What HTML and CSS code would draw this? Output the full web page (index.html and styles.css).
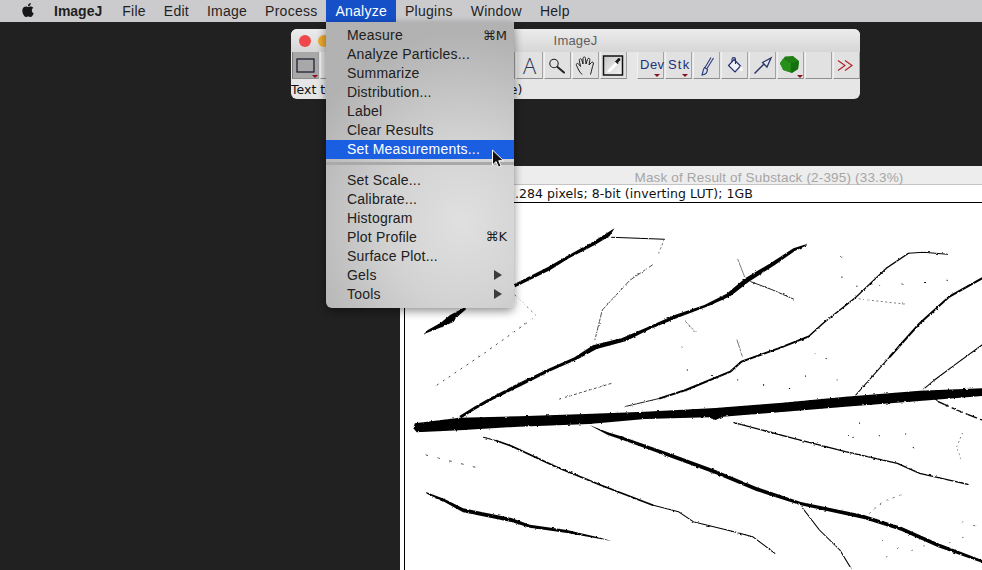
FILE: index.html
```html
<!DOCTYPE html>
<html lang="en">
<head>
<meta charset="utf-8">
<title>ImageJ</title>
<link rel="stylesheet" href="styles.css">
</head>
<body>
<div class="desktop">
  <header class="menubar">
    <svg class="apple" viewBox="0 0 24 24"><path d="M12.152 6.896c-.948 0-2.415-1.078-3.96-1.04-2.04.027-3.91 1.183-4.961 3.014-2.117 3.675-.546 9.103 1.519 12.09 1.013 1.454 2.208 3.09 3.792 3.039 1.52-.065 2.09-.987 3.935-.987 1.831 0 2.35.987 3.96.948 1.637-.026 2.676-1.48 3.676-2.948 1.156-1.688 1.636-3.325 1.662-3.415-.039-.013-3.182-1.221-3.22-4.857-.026-3.04 2.48-4.494 2.597-4.559-1.429-2.09-3.623-2.324-4.39-2.376-2-.156-3.675 1.09-4.61 1.09zM15.53 3.83c.843-1.012 1.4-2.427 1.245-3.83-1.207.052-2.662.805-3.532 1.818-.78.896-1.454 2.338-1.273 3.714 1.338.104 2.715-.688 3.559-1.701"/></svg>
    <span class="mb-item mb-app">ImageJ</span>
    <span class="mb-item">File</span>
    <span class="mb-item">Edit</span>
    <span class="mb-item">Image</span>
    <span class="mb-item">Process</span>
    <span class="mb-item mb-active">Analyze</span>
    <span class="mb-item">Plugins</span>
    <span class="mb-item">Window</span>
    <span class="mb-item">Help</span>
  </header>

  <section class="ij-window">
    <div class="ij-title">
      <span class="light red"></span><span class="light amber"></span>
      <span class="ij-title-text">ImageJ</span>
    </div>
    <div class="toolbar">
      <div class="tool selected"><svg viewBox="0 0 27 27"><rect x="5" y="7" width="17" height="13" fill="none" stroke="#14162e" stroke-width="1.2"/><path d="M20 23h6l-3 3z" fill="#8a1020"/></svg></div>
      <div class="tool"></div><div class="tool"></div><div class="tool"></div><div class="tool"></div><div class="tool"></div><div class="tool"></div><div class="tool"></div>
      <div class="tool tool-a">A</div>
      <div class="tool"><svg viewBox="0 0 27 27"><circle cx="10" cy="11.500" r="4.200" fill="none" stroke="#222" stroke-width="1.100"/><path d="M13.500 15l6.500 5.500" stroke="#222" stroke-width="2" stroke-linecap="round"/></svg></div>
      <div class="tool"><svg viewBox="0 0 27 27"><path d="M10 22.500C7 19.500 6 16.500 4.500 13.500C3.800 11.500 5.800 10.500 7 12.500L8.500 14.500L7.300 8.500C7 6.500 9.300 6 9.800 8L11 12L11 6.500C11 4.500 13.500 4.500 13.500 6.500L14 12L15.500 7.500C16 5.500 18.300 6 17.800 8.500L17 13L19.500 10.500C20.500 9.500 22 10.500 21.300 12C20.300 15 19.500 19 18.500 22.500" fill="none" stroke="#1c1c1c" stroke-width="1"/></svg></div>
      <div class="tool"><svg viewBox="0 0 27 27"><defs><linearGradient id="drop" x1="0" y1="0" x2="1" y2="1"><stop offset="0" stop-color="#c8c8c8"/><stop offset="1" stop-color="#f2f2f2"/></linearGradient></defs><rect x="3.500" y="4" width="19" height="19" fill="url(#drop)" stroke="#111" stroke-width="1.500"/><path d="M7 20.500l1-2.500 7.500-7.500 2 2-7.500 7.500z" fill="#fff"/><path d="M15.500 9l2.500-2.500c1-1 2.800 0 2.300 1.800l-2.300 2.200 .6 .7-1 .8-3-3z" fill="#1a1a1a"/></svg></div>
      <div class="tool tool-gap tool-text">Dev<i class="caret"></i></div>
      <div class="tool tool-text tool-stk">Stk<i class="caret"></i></div>
      <div class="tool"><svg viewBox="0 0 27 27"><path d="M18 5.500L12 15.500M20.500 6L14 16.500" fill="none" stroke="#2a3a78" stroke-width="1.100"/><path d="M11.500 15.500l3 1.800c-.3 3.500-2.200 5.700-5.500 5.700 1-1.500.5-5 2.500-7.500z" fill="#d9dfee" stroke="#2a3a78" stroke-width="1.200"/></svg></div>
      <div class="tool"><svg viewBox="0 0 27 27"><path d="M13 7.500l6.500 6.500-5.500 6-6.500-6.500z" fill="#eef0f6" stroke="#233070" stroke-width="1.200"/><path d="M11 10V7.500c0-2.500 3.500-2.500 3.500 0v4.500" fill="none" stroke="#233070" stroke-width="1.100"/><path d="M19.500 14l2 2v3h-3z" fill="#fff"/></svg></div>
      <div class="tool"><svg viewBox="0 0 27 27"><path d="M5.500 21.500L15 12" stroke="#2a3566" stroke-width="1.400"/><path d="M13.500 10.500L22 6l-4 9z" fill="#e4e8f2" stroke="#2a3566" stroke-width="1.300"/></svg></div>
      <div class="tool"><svg viewBox="0 0 27 27"><path d="M8 4.500l8-.5 6 5-1 8-6 4-9-3-3-7z" fill="#1f7d14"/><path d="M6 6.500l8 5-1 8.800-6-2-4-6.500z" fill="#25901a"/><path d="M14 11.500l8-2.500-1 8-6.500 4z" fill="#157010"/><path d="M20 23h6l-3 3z" fill="#8a1020"/></svg></div>
      <div class="tool"></div>
      <div class="tool"><svg viewBox="0 0 27 27"><path d="M5 8.500l7 5-7 5M12 8.500l7 5-7 5" fill="none" stroke="#b3242c" stroke-width="1.200"/></svg></div>
    </div>
    <div class="ij-status"><span>Text tool</span><span class="status-rest">(double click to configure)</span></div>
  </section>

  <section class="img-window">
    <div class="img-title">Mask of Result of Substack (2-395) (33.3%)</div>
    <div class="img-info">1.712x1.284 pixels; 8-bit (inverting LUT); 1GB</div>
    <div class="canvas">
      <svg class="leaf" viewBox="13.500 9 1554.500 1101" preserveAspectRatio="none">
        <defs>
          <filter id="rough" x="0" y="0" width="1600" height="1130" filterUnits="userSpaceOnUse">
            <feTurbulence type="fractalNoise" baseFrequency="0.12" numOctaves="2" seed="4"/>
            <feDisplacementMap in="SourceGraphic" scale="7" xChannelSelector="R" yChannelSelector="G"/>
          </filter>
        </defs>
        <g class="veins" filter="url(#rough)" fill="none" stroke="#000" stroke-linecap="round" stroke-linejoin="round">
          <path class="solid" d="M40 670L160 653 320 649 500 642 660 635 850 624 1030 608 1200 590 1400 572 1568 565V588L1400 603 1200 620 1030 636 870 650 850 660 830 652 660 657 510 672 320 680 160 691 45 697 36 685z"/>
          <path class="solid" d="M160 648L200 620 240 595 320 549 400 506 470 472 520 436 600 413 660 385 740 345 820 315 880 281 930 235 1000 188 1060 145 1098 131 1098 135 1065 152 1010 195 940 245 890 289 830 319 745 355 670 389 610 423 530 447 480 477 405 514 330 556 250 599 205 627 165 655z"/>
          <path class="solid" d="M62 405L75 390 110 368 135 345 175 322 178 328 150 355 145 365 115 380 70 400z"/>
          <path class="solid" d="M308 252L400 200 450 168 520 125 578 85 565 108 525 135 455 175 405 210 310 262z"/>
          <path class="solid" d="M510 675L560 697 600 710 740 765 850 810 960 861 1080 906 1250 945 1350 980 1450 1030 1568 1080V1088L1450 1042 1350 992 1250 957 1080 916 960 873 850 822 740 777 600 720 560 705z"/>
          <path class="solid" d="M70 876L120 897 170 925 300 954 350 974 450 990 540 1013 570 1023 540 1017 450 999 350 983 300 966 170 937 120 906 72 881z"/>
          <polyline stroke-width="2.500" points="605,620 700,595"/>
          <polyline stroke-width="6" points="700,595 770,570 890,515 920,485 1020,445 1100,410"/>
          <polyline stroke-width="4" points="1100,410 1140,370 1225,295 1310,205 1370,160"/>
          <polyline stroke-width="3" points="1370,160 1410,157 1475,163"/>
          <polyline stroke-width="3" points="1228,585 1320,470"/>
          <polyline stroke-width="6" points="1320,470 1400,370 1480,290 1568,235"/>
          <polyline stroke-width="3" points="1410,568 1440,540 1500,490 1568,435"/>
          <polyline stroke-width="3" points="225,712 260,722"/>
          <polyline stroke-width="5" points="260,722 300,738 420,800 540,855 610,885 680,915"/>
          <polyline stroke-width="3" points="680,915 750,935 790,965 900,995 950,1010 1010,1060"/>
          <polyline stroke-width="4" points="900,668 1060,715 1200,755 1340,790 1400,820 1530,853"/>
          <polyline stroke-width="3" points="1085,925 1130,990 1185,1050 1215,1105"/>
          <polyline stroke-width="3" points="570,112 640,115 712,118"/>
          <polyline stroke-width="1.500" stroke-dasharray="5 8" points="712,118 695,165"/>
          <polyline stroke-width="2" stroke-dasharray="14 6" points="680,195 620,240 545,330 525,420"/>
          <polyline stroke-width="1.500" points="910,178 930,235"/>
          <polyline stroke-width="2.500" points="945,245 1000,268 1060,297"/>
          <polyline stroke-width="1.500" points="908,420 922,468"/>
          <polyline stroke-width="1.500" stroke-dasharray="6 6" points="770,365 795,395"/>
          <polyline stroke-width="4" stroke-dasharray="30 12" points="1450,605 1500,630 1568,660"/>
          <polyline stroke-width="1.500" stroke-dasharray="3 9" points="1225,295 1300,305 1360,312"/>
          <polyline stroke-width="2" stroke-dasharray="6 8" points="430,597 570,550"/>
          <polyline stroke-width="2" stroke-dasharray="4 16" points="100,555 220,465 365,350"/>
          <polyline stroke-width="1.500" stroke-dasharray="4 12" points="310,285 365,345"/>
          <polyline stroke-width="2" stroke-dasharray="5 28" points="70,765 215,805"/>
          <polyline stroke-width="1.500" stroke-dasharray="4 16" points="1265,940 1300,905 1350,885"/>
          <polyline stroke-width="1.500" stroke-dasharray="3 10" points="1515,700 1500,740 1510,775"/>
          <polyline stroke-width="3" stroke-dasharray="1 60" points="1190,170 1190,230 1200,260 1390,250 1480,240"/>
          <polyline stroke-width="3" stroke-dasharray="1 70" points="760,440 775,515 1075,570 1130,437 1250,695 1180,715 1390,700 1380,760"/>
          <polyline stroke-width="2" stroke-dasharray="1 70" points="1300,1020 1300,1050 1480,1030 1530,940 1560,1000 1260,1085"/>
        </g>
      </svg>
    </div>
  </section>

  <nav class="menu">
    <div class="menu-item"><span>Measure</span><span class="short">⌘M</span></div>
    <div class="menu-item">Analyze Particles...</div>
    <div class="menu-item">Summarize</div>
    <div class="menu-item">Distribution...</div>
    <div class="menu-item">Label</div>
    <div class="menu-item">Clear Results</div>
    <div class="menu-item hot">Set Measurements...</div>
    <div class="menu-sep"></div>
    <div class="menu-item">Set Scale...</div>
    <div class="menu-item">Calibrate...</div>
    <div class="menu-item">Histogram</div>
    <div class="menu-item"><span>Plot Profile</span><span class="short">⌘K</span></div>
    <div class="menu-item">Surface Plot...</div>
    <div class="menu-item"><span>Gels</span><i class="sub"></i></div>
    <div class="menu-item"><span>Tools</span><i class="sub"></i></div>
  </nav>

  <svg class="cursor" viewBox="0 0 14 20"><path d="M1.500 1v15l3.600-3.400 2.400 5.600 2.600-1.100-2.400-5.400h4.800z" fill="#111" stroke="#fff" stroke-width="1"/></svg>
</div>
</body>
</html>
```

FILE: styles.css
```css
html, body { margin: 0; padding: 0; overflow: hidden; }
.desktop {
  position: relative;
  width: 982px;
  height: 570px;
  overflow: hidden;
  background: #212121;
  font-family: "Liberation Sans", Arial, sans-serif;
  font-size: 14px;
  color: #1f1f1f;
}

/* menu bar */
.menubar {
  display: flex;
  align-items: center;
  height: 22px;
  background: #cbcbce;
  padding-left: 21px;
}
.apple { width: 14px; height: 16px; margin-right: 10px; fill: #161616; margin-top: -3px; }
.mb-item { padding: 0 9px; line-height: 22px; letter-spacing: .25px; }
.mb-app { font-weight: bold; padding-right: 11px; letter-spacing: 0; }
.mb-active { background: #1550c9; color: #fff; }

/* ImageJ toolbar window */
.ij-window {
  position: absolute;
  left: 291px;
  top: 29px;
  width: 569px;
  height: 70px;
  border-radius: 6px;
  overflow: hidden;
  background: #e6e6e6;
  display: flex;
  flex-direction: column;
}
.ij-title {
  position: relative;
  display: flex;
  align-items: center;
  gap: 7px;
  height: 23px;
  flex: none;
  padding-left: 8px;
  background: linear-gradient(#ececec, #d6d6d6);
}
.light { width: 12px; height: 12px; border-radius: 50%; }
.red { background: #f0484a; }
.amber { background: #eda92c; }
.ij-title-text {
  position: absolute;
  left: 0;
  right: 0;
  text-align: center;
  font-size: 13px;
  letter-spacing: .2px;
  color: #5e5e5e;
}
.toolbar {
  display: flex;
  gap: 1px;
  padding-left: 1px;
  height: 27px;
  flex: none;
}
.tool {
  position: relative;
  flex: none;
  width: 27px;
  height: 27px;
  box-sizing: border-box;
  background: #e1e1e1;
  border-bottom: 1px solid #8e8e8e;
  border-right: 1px solid #a2a2a2;
  border-left: 1px solid #f2f2f2;
}
.tool svg { display: block; position: absolute; left: -1px; top: 0; width: 27px; height: 27px; }
.selected { background: #a8a8a8; border-left-color: #777; }
.tool-a { font-size: 22px; line-height: 27px; text-align: center; color: #2d3550; font-family: "Open Sans", sans-serif; font-weight: 300; }
.tool-gap { margin-left: 9px; }
.tool-text {
  font-family: "Liberation Sans", sans-serif;
  font-size: 13px;
  line-height: 25px;
  color: #1d3278;
  padding-left: 2px;
  letter-spacing: .5px;
  white-space: nowrap;
}
.tool-stk { letter-spacing: 1.200px; }
.caret {
  position: absolute;
  right: 3px;
  bottom: 1px;
  width: 0;
  height: 0;
  border: 3px solid transparent;
  border-top: 3px solid #8a1020;
  border-bottom: 0;
}
.ij-status {
  height: 20px;
  line-height: 21px;
  font-family: "DejaVu Sans", sans-serif;
  font-size: 12.500px;
  color: #111;
  white-space: nowrap;
}
.status-rest { margin-left: 15px; }

/* image window */
.img-window {
  position: absolute;
  left: 400px;
  top: 166px;
  width: 738px;
  height: 420px;
  background: #fff;
  display: flex;
  flex-direction: column;
}
.img-title {
  height: 18px;
  line-height: 23px;
  text-align: center;
  background: #ededed;
  border-bottom: 1px solid #c4c4c4;
  font-size: 13.500px;
  letter-spacing: .17px;
  color: #a6a6a6;
  flex: none;
}
.img-info {
  height: 17px;
  line-height: 17px;
  padding-left: 63.500px;
  font-family: "DejaVu Sans", sans-serif;
  font-size: 12.500px;
  letter-spacing: .05px;
  color: #111;
  white-space: nowrap;
  flex: none;
}
.canvas {
  margin-left: 4px;
  border-left: 1px solid #000;
  border-top: 1px solid #000;
  flex: 1;
  overflow: hidden;
  background: #fff;
}
.leaf { display: block; width: 577px; height: 367px; }
.solid { fill: #000; stroke: none; }

/* dropdown */
.menu {
  position: absolute;
  left: 326px;
  top: 22px;
  width: 188px;
  height: 286px;
  box-sizing: border-box;
  padding-top: 3.500px;
  border-radius: 0 0 6px 6px;
  background: radial-gradient(ellipse 170px 190px at 72% 70%, #e0e0e0 0%, #d2d2d2 45%, #b2b2b2 100%);
  box-shadow: 0 3px 10px rgba(0, 0, 0, .45);
  z-index: 2;
}
.menu-item {
  display: flex;
  justify-content: space-between;
  align-items: center;
  height: 19px;
  padding: 0 7px 0 21px;
  color: #202020;
  letter-spacing: .2px;
}
.hot { background: #1a5fe2; color: #fff; }
.menu-sep { height: 11.500px; background: linear-gradient(#0000 0, #0000 3px, #a9a9a9 3px, #a9a9a9 6px, #0000 6px); }
.short { font-family: "DejaVu Sans", sans-serif; font-size: 13px; letter-spacing: 0; }
.sub {
  margin-right: 5px;
  width: 0;
  height: 0;
  border-style: solid;
  border-width: 5px 0 5px 8px;
  border-color: transparent transparent transparent #3c3c3c;
}
.cursor { position: absolute; left: 491px; top: 149px; width: 14px; height: 20px; z-index: 3; }
```
